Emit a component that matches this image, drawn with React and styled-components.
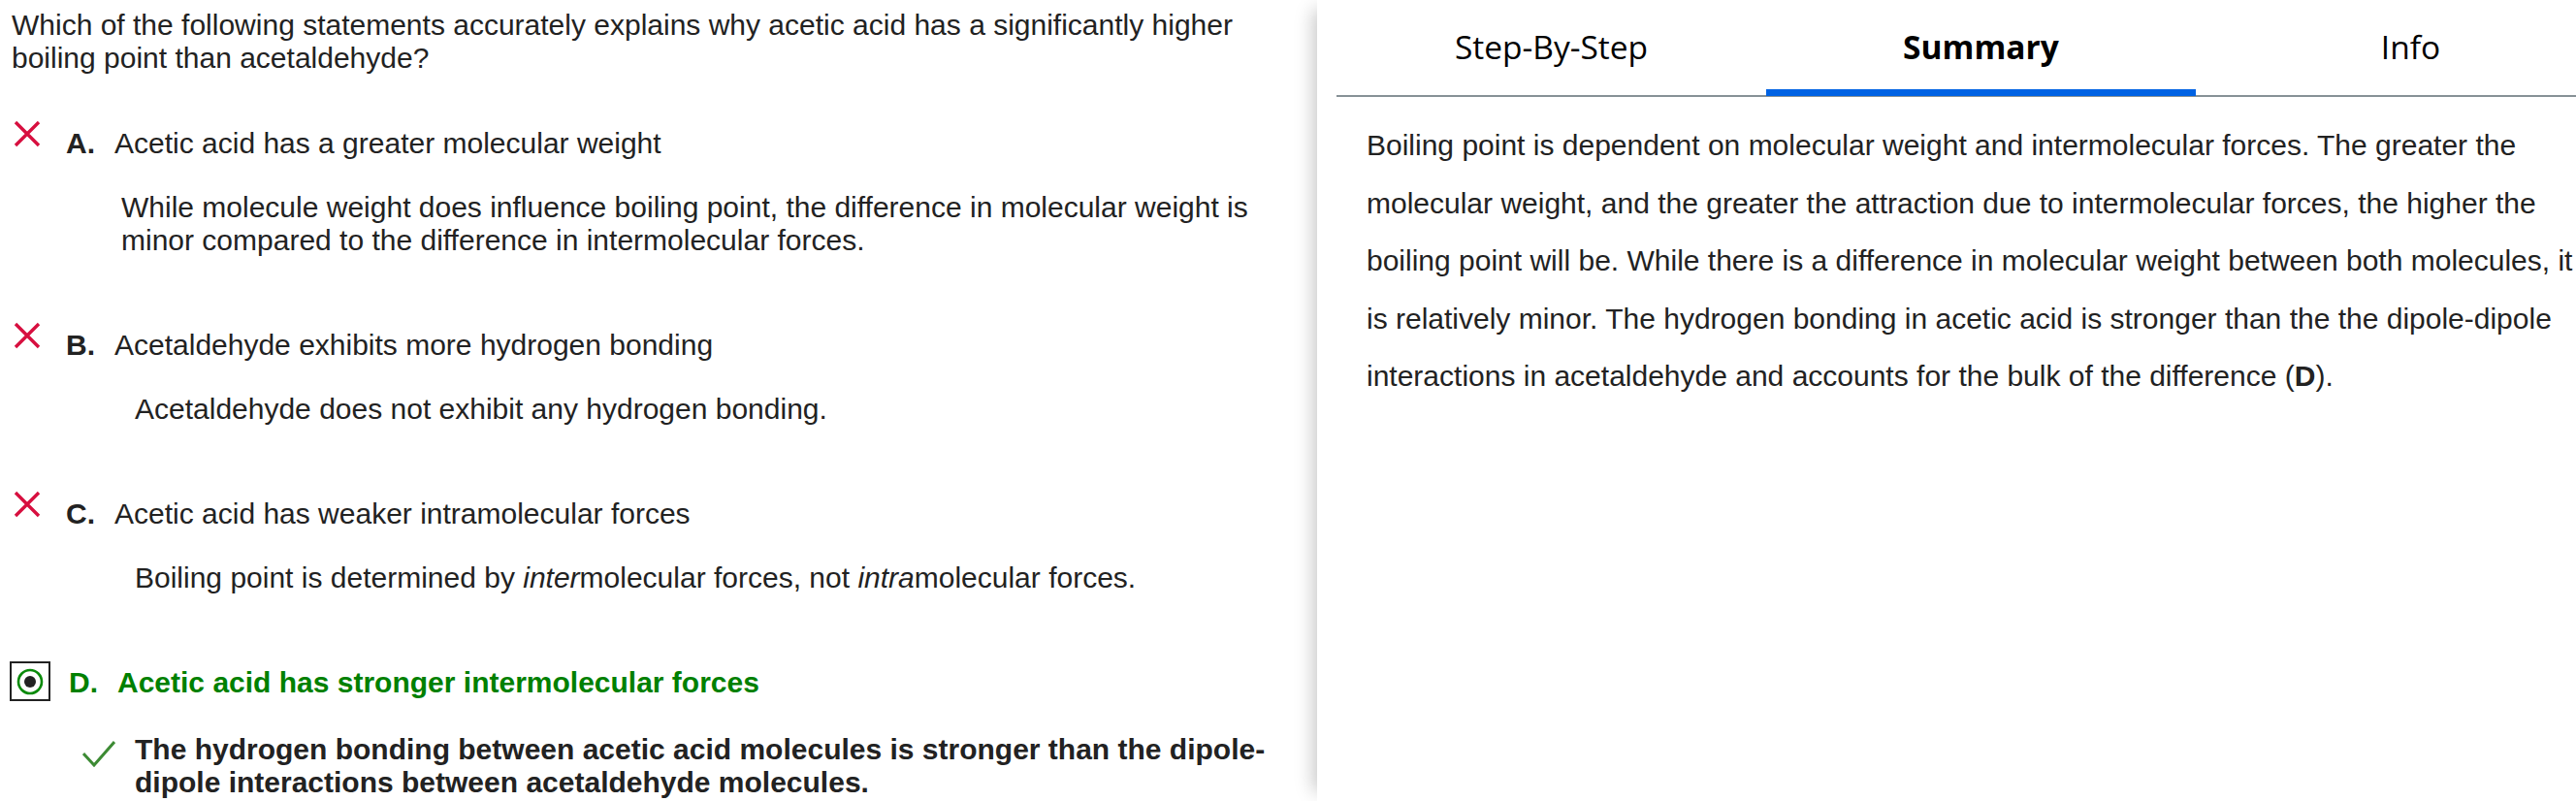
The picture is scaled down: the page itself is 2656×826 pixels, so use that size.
import React from "react";
import styled, { createGlobalStyle } from "styled-components";

const Global = createGlobalStyle`
  html, body { margin: 0; padding: 0; background: #fff; }
  body { overflow: hidden; }
  #root { height: 826px; }
`;

const Page = styled.div`
  display: flex;
  width: 2656px;
  height: 826px;
  overflow: hidden;
  font-family: "Liberation Sans", Arial, sans-serif;
  font-size: 30px;
  color: #222;
`;

const LeftPanel = styled.div`
  flex: none;
  width: 1358px;
  box-sizing: border-box;
  padding: 9px 20px 0 12px;
`;

const Question = styled.div`
  line-height: 34px;
`;

const Option = styled.div`
  margin-top: ${(p) => (p.$first ? 54 : 74)}px;
`;

const OptionRow = styled.div`
  display: flex;
  align-items: flex-start;
  line-height: 34px;
  color: ${(p) => (p.$correct ? "#008000" : "#222")};
  font-weight: ${(p) => (p.$correct ? 700 : 400)};
`;

const IconCell = styled.div`
  flex: none;
  width: 56px;
  height: 34px;
  display: flex;
  align-items: flex-start;
`;

const CrossIcon = styled.svg`
  margin: -7px 0 0 2px;
  width: 28px;
  height: 28px;
`;

const RadioFrame = styled.span`
  display: flex;
  align-items: center;
  justify-content: center;
  box-sizing: border-box;
  width: 42px;
  height: 41px;
  margin: -5px 0 0 -2px;
  border: 2px solid #222;
`;

const Letter = styled.span`
  flex: none;
  width: 50px;
  font-weight: 700;
  margin-left: ${(p) => (p.$correct ? 3 : 0)}px;
`;

const Explanation = styled.div`
  display: flex;
  align-items: flex-start;
  margin-top: ${(p) => (p.$bold ? 35 : 32)}px;
  padding-left: ${(p) => p.$indent}px;
  line-height: 34px;
  font-weight: ${(p) => (p.$bold ? 700 : 400)};
`;

const CheckIcon = styled.svg`
  flex: none;
  width: 34px;
  height: 28px;
  margin: 7px 20px 0 0;
`;

const RightPanel = styled.div`
  flex: none;
  width: 1349px;
  box-sizing: border-box;
  padding-left: 20px;
  background: #fff;
  box-shadow: -14px 0 18px -10px rgba(0, 0, 0, 0.22);
  position: relative;
`;

const TabBar = styled.div`
  display: flex;
  border-bottom: 2px solid #879196;
`;

const Tab = styled.div`
  position: relative;
  flex: none;
  width: 443px;
  height: 98px;
  display: flex;
  align-items: center;
  justify-content: center;
  padding-bottom: 2px;
  box-sizing: border-box;
  font-family: "Open Sans", "Noto Sans", sans-serif;
  font-size: 33.5px;
  color: #000;
  font-weight: ${(p) => (p.$active ? 700 : 400)};
  &::after {
    content: "";
    display: ${(p) => (p.$active ? "block" : "none")};
    position: absolute;
    left: 0;
    right: 0;
    top: 92px;
    height: 7px;
    background: #0062e3;
  }
`;

const Summary = styled.p`
  margin: 20px 0 0;
  padding: 0 42px 0 31px;
  line-height: 59.5px;
  color: #222;
`;

const Cross = () => (
  <CrossIcon viewBox="0 0 28 28">
    <path d="M2 2 L26 26 M26 2 L2 26" stroke="#d70f3f" strokeWidth="3.4" fill="none" />
  </CrossIcon>
);

const Radio = () => (
  <RadioFrame>
    <svg width="30" height="30" viewBox="0 0 30 30">
      <circle cx="15" cy="15" r="12" stroke="#0a8a0a" strokeWidth="2.6" fill="none" />
      <circle cx="15" cy="15" r="6" fill="#222" />
    </svg>
  </RadioFrame>
);

const Check = () => (
  <CheckIcon viewBox="0 0 34 28">
    <path d="M1 14 L12 26 L33 2" stroke="#3d8b34" strokeWidth="3" fill="none" />
  </CheckIcon>
);

const options = [
  {
    letter: "A.",
    text: "Acetic acid has a greater molecular weight",
    indent: 113,
    expl: "While molecule weight does influence boiling point, the difference in molecular weight is minor compared to the difference in intermolecular forces.",
  },
  {
    letter: "B.",
    text: "Acetaldehyde exhibits more hydrogen bonding",
    indent: 127,
    expl: "Acetaldehyde does not exhibit any hydrogen bonding.",
  },
  {
    letter: "C.",
    text: "Acetic acid has weaker intramolecular forces",
    indent: 127,
    expl: (
      <>
        Boiling point is determined by <i>inter</i>molecular forces, not <i>intra</i>molecular forces.
      </>
    ),
  },
];

export default function App() {
  return (
    <>
      <Global />
      <Page>
        <LeftPanel>
          <Question>
            Which of the following statements accurately explains why acetic acid has a significantly higher boiling point than acetaldehyde?
          </Question>
          {options.map((o, i) => (
            <Option key={o.letter} $first={i === 0}>
              <OptionRow>
                <IconCell>
                  <Cross />
                </IconCell>
                <Letter>{o.letter}</Letter>
                <span>{o.text}</span>
              </OptionRow>
              <Explanation $indent={o.indent}>
                <span>{o.expl}</span>
              </Explanation>
            </Option>
          ))}
          <Option>
            <OptionRow $correct>
              <IconCell>
                <Radio />
              </IconCell>
              <Letter $correct>D.</Letter>
              <span>Acetic acid has stronger intermolecular forces</span>
            </OptionRow>
            <Explanation $indent={73} $bold>
              <Check />
              <span>
                The hydrogen bonding between acetic acid molecules is stronger than the dipole-dipole interactions between acetaldehyde molecules.
              </span>
            </Explanation>
          </Option>
        </LeftPanel>
        <RightPanel>
          <TabBar>
            <Tab>Step-By-Step</Tab>
            <Tab $active>Summary</Tab>
            <Tab>Info</Tab>
          </TabBar>
          <Summary>
            Boiling point is dependent on molecular weight and intermolecular forces. The greater the molecular weight, and the greater the attraction due to intermolecular forces, the higher the boiling point will be. While there is a difference in molecular weight between both molecules, it is relatively minor. The hydrogen bonding in acetic acid is stronger than the the dipole-dipole interactions in acetaldehyde and accounts for the bulk of the difference (<b>D</b>).
          </Summary>
        </RightPanel>
      </Page>
    </>
  );
}
